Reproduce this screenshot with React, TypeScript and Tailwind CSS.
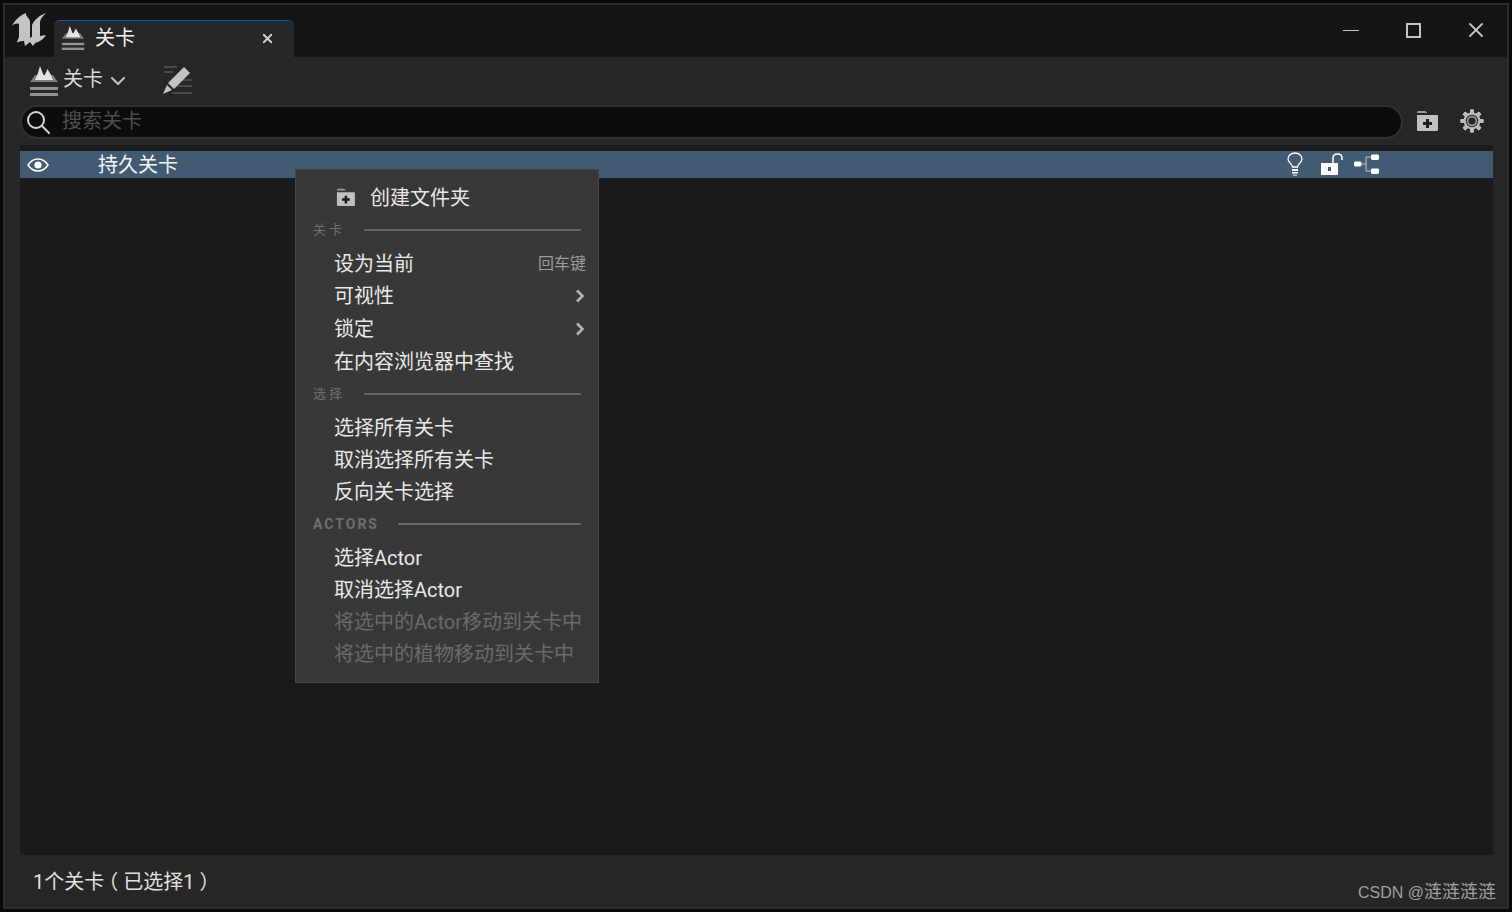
import { ChevronDown, X } from 'lucide-react';

const cn = "font-['Roboto','Noto_Sans_CJK_SC',sans-serif]";

// 关卡图标:山 + 横线
function LevelIcon({ className }: { className?: string }) {
  return (
    <svg viewBox="0 0 28 30" className={className}>
      <path d="M5 9 L0 16 L28 16 L23 9 Z" fill="#7c7c7c" />
      <path d="M5 14 L8 7 L10 0 L13 8 L14.5 9.5 L17.5 3 L21 9 L23 14 Z" fill="#e4e4e4" />
      <rect x="0" y="21" width="28" height="3" fill="#929292" />
      <rect x="0" y="27" width="28" height="3" fill="#929292" />
    </svg>
  );
}

function UnrealLogo() {
  return (
    <svg viewBox="0 0 36 36" className="h-9 w-9 text-[#c4c4c4]" fill="currentColor">
      <path d="M0 14 C2 9 8 3 14 1 C13 4 18 6 18 10 L18 26 L20 24.5 L20 13 C22 8 28 3 34 1 C31 4 28 7 28 11 L28 24 L34 23 C31 28 27 30 23 31 L21 34 L18 30 L13 34 L12 29 C9 29 5 30 5 31 C5 28 7 27 7 24 L7 13 C7 11 3 11 0 14 Z" />
    </svg>
  );
}

function NewFolderIcon({ className }: { className?: string }) {
  return (
    <svg viewBox="0 0 22 21" className={className}>
      <path d="M1 3 C1 1 2 1 3 1 L9 1 C10 1 11 2 11 3 Z" fill="#9a9a9a" />
      <path d="M1 5 L21 5 C21.6 5 22 5.4 22 6 L22 19.5 C22 20.3 21.5 21 21 21 L2 21 C1.4 21 1 20.5 1 20 Z" fill="#c0c0c0" />
      <path d="M10 9 L13 9 L13 12 L16 12 L16 15 L13 15 L13 18 L10 18 L10 15 L7 15 L7 12 L10 12 Z" fill="#1c1c1c" />
    </svg>
  );
}

function EditIcon() {
  return (
    <svg viewBox="0 0 30 30" className="h-[30px] w-[30px]" fill="none">
      <path d="M1 1 L14 1 M1 6 L10 6 M17 14 L29 14 M14 20 L29 20 M9 27 L29 27" stroke="#6e6e6e" strokeWidth="1.2" />
      <path d="M21 1 L27 7 L11 23 L5 17 Z" fill="#c4c4c4" />
      <path d="M4 19 L9 24 L0 28 Z" fill="#c4c4c4" />
    </svg>
  );
}

function SearchIcon() {
  return (
    <svg viewBox="0 0 24 24" className="h-6 w-6" fill="none" stroke="#d4d4d4" strokeWidth="2">
      <circle cx="10" cy="10" r="8" />
      <path d="M16 16 L23 23" strokeLinecap="round" />
    </svg>
  );
}

function GearIcon() {
  return (
    <svg viewBox="0 0 24 24" className="h-6 w-6">
      <g fill="#bcbcbc">
        {[0, 45, 90, 135, 180, 225, 270, 315].map((a) => (
          <rect key={a} x="10" y="0.5" width="4" height="23" rx="0.8" transform={`rotate(${a} 12 12)`} />
        ))}
      </g>
      <circle cx="12" cy="12" r="8.4" fill="#bcbcbc" />
      <circle cx="12" cy="12" r="6.2" fill="#262626" />
      <circle cx="12" cy="12" r="4.4" fill="none" stroke="#9a9a9a" strokeWidth="1.6" />
    </svg>
  );
}

function EyeIcon() {
  return (
    <svg viewBox="0 0 22 14" className="h-[14px] w-[22px]">
      <path d="M1 7 C4 2.5 7.5 1 11 1 C14.5 1 18 2.5 21 7 C18 11.5 14.5 13 11 13 C7.5 13 4 11.5 1 7 Z" fill="none" stroke="#ffffff" strokeWidth="1.5" />
      <circle cx="11" cy="7" r="3.6" fill="#ffffff" />
    </svg>
  );
}

function BulbIcon() {
  return (
    <svg viewBox="0 0 16 24" className="h-6 w-4" fill="none">
      <path d="M5.5 15 C5.5 12 1 10.5 1 7 C1 3.5 4 1 8 1 C12 1 15 3.5 15 7 C15 10.5 10.5 12 10.5 15 Z" stroke="#ffffff" strokeWidth="1.3" />
      <rect x="5" y="17" width="6" height="2" fill="#ffffff" />
      <rect x="5" y="20" width="6" height="1.5" fill="#ffffff" />
      <rect x="6" y="22.5" width="4" height="1.2" fill="#cfcfcf" />
    </svg>
  );
}

function UnlockIcon() {
  return (
    <svg viewBox="0 0 22 22" className="h-[22px] w-[22px]">
      <path d="M12 10 L12 5 C12 2.5 14 1 16.5 1 C19 1 21 2.5 21 5 L21 7" fill="none" stroke="#ffffff" strokeWidth="1.5" />
      <path d="M0 10 L17 10 L17 21 C17 21.6 16.6 22 16 22 L1 22 C0.4 22 0 21.6 0 21 Z" fill="#ffffff" />
      <rect x="7" y="14" width="3" height="4" fill="#435a73" />
    </svg>
  );
}

function HierarchyIcon() {
  return (
    <svg viewBox="0 0 25 20" className="h-5 w-[25px]">
      <path d="M7 10 L12 10 M12 3 L12 17 M12 3 L18 3 M12 17 L18 17" stroke="#b7c3d0" strokeWidth="1" fill="none" />
      <rect x="0" y="7.5" width="7.5" height="5" rx="1.4" fill="#ffffff" />
      <rect x="17" y="0.5" width="8" height="5.5" rx="1.4" fill="#ffffff" />
      <rect x="17" y="14.5" width="8" height="5.5" rx="1.4" fill="#ffffff" />
    </svg>
  );
}

function MenuItem({ label, right, arrow, disabled }: { label: string; right?: string; arrow?: boolean; disabled?: boolean }) {
  return (
    <div className={`flex h-8 items-center pl-[38px] pr-[13px] pt-[2px] text-[20px] ${disabled ? 'text-[#6a6a6a]' : 'text-[#e8e8e8]'}`}>
      <span className="flex-1 whitespace-nowrap">{label}</span>
      {right && <span className="-mr-px text-[16px] text-[#9a9a9a]">{right}</span>}
      {arrow && (
        <svg viewBox="0 0 10 14" className="h-[14px] w-[10px]" fill="none" stroke="#b4b4b4" strokeWidth="2.6">
          <path d="M2 1.5 L7.5 7 L2 12.5" />
        </svg>
      )}
    </div>
  );
}

function MenuHeading({ label, wide }: { label: string; wide?: boolean }) {
  return (
    <div className="flex h-[34px] items-center pl-[17px] pr-[17px]">
      <span className={`whitespace-nowrap text-[#6e6e6e] ${wide ? 'text-[14px] font-bold tracking-[2px]' : 'text-[13px] tracking-[3px]'}`}>{label}</span>
      <div className="ml-[19px] h-0.5 flex-1 bg-[#666666]" />
    </div>
  );
}

export default function App() {
  return (
    <div className={`${cn} h-[912px] w-[1512px] bg-[#0b0b0b] p-[3px]`}>
      <div className="relative flex h-[906px] flex-col border-2 border-[#2e2e2e] bg-[#262626]">
        {/* 标题栏 */}
        <div className="flex h-[52px] shrink-0 items-end bg-[#151515]">
          <div className="mb-[9px] ml-[7px] mr-[6px]"><UnrealLogo /></div>
          <div className="flex h-[37px] w-[240px] items-center rounded-t-md border-t border-t-[#0a5cb8] bg-[#262626] pb-[2px] pl-[7px] pr-[19px]">
            <LevelIcon className="h-[24px] w-[24px]" />
            <span className="ml-[10px] flex-1 text-[20px] leading-none text-[#f2f2f2]">关卡</span>
            <X size={15} strokeWidth={3} className="text-[#d0d0d0]" />
          </div>
          <div className="flex-1" />
          <div className="mb-[15px] flex items-center pr-[19px] text-[#c4c4c4]">
            <div className="h-px w-[16px] bg-[#c4c4c4]" />
            <div className="ml-[47px] h-[15px] w-[15px] border-2 border-[#c4c4c4]" />
            <X size={24} strokeWidth={1.8} className="ml-[43px]" />
          </div>
        </div>

        {/* 工具栏 */}
        <div className="flex h-[47px] shrink-0 items-center pl-[25px]">
          <LevelIcon className="h-[30px] w-[28px]" />
          <span className="mb-[3px] ml-[5px] text-[20px] text-[#d8d8d8]">关卡</span>
          <ChevronDown size={24} strokeWidth={2} className="ml-[3px] text-[#c4c4c4]" />
          <div className="ml-[33px]"><EditIcon /></div>
        </div>

        {/* 搜索栏 */}
        <div className="flex h-[36px] shrink-0 items-center pl-[15px] pr-[18px]">
          <div className="flex h-[34px] flex-1 items-center rounded-full border-2 border-[#303030] bg-[#0c0c0c] pl-[4px]">
            <SearchIcon />
            <span className="mb-[2px] ml-[12px] text-[20px] text-[#4e4e4e]">搜索关卡</span>
          </div>
          <div className="mb-[4px] ml-[13px] mr-[11px]"><NewFolderIcon className="h-[21px] w-[22px]" /></div>
          <div className="mb-[2px] ml-[11px] mr-[5px]"><GearIcon /></div>
        </div>

        {/* 列表 */}
        <div className="ml-[15px] mr-[14px] mt-[5px] flex min-h-0 flex-1 flex-col bg-[#1a1a1a] pt-[6px]">
          <div className="relative flex h-[27px] shrink-0 items-center bg-[#435a73] pl-[7px] text-[20px] text-[#f4f4f4]">
            <EyeIcon />
            <span className="ml-[49px]">持久关卡</span>
            <div className="absolute left-[1267px] top-[1px] flex items-center gap-[18px]">
              <BulbIcon />
              <UnlockIcon />
            </div>
            <div className="absolute left-[1334px] top-[3px]"><HierarchyIcon /></div>
          </div>
        </div>

        {/* 状态栏 */}
        <div className="flex h-[52px] shrink-0 items-center pl-[28px] pt-[2px] text-[20px] text-[#e0e0e0]">
          <span>1个关卡</span>
          <span className="ml-[4px] mr-[5px] [font-feature-settings:'halt']">（</span>
          <span>已选择1</span>
          <span className="ml-[5px] [font-feature-settings:'halt']">）</span>
        </div>

        {/* 右键菜单 */}
        <div className="absolute left-[290px] top-[164px] w-[304px] border border-[#464646] bg-[#383838] pt-[11px]">
          <div className="flex h-[32px] items-center pl-[40px] pt-[2px] text-[20px] text-[#e8e8e8]">
            <NewFolderIcon className="mb-[3px] h-[18px] w-[19px]" />
            <span className="ml-[15px]">创建文件夹</span>
          </div>
          <MenuHeading label="关卡" />
          <MenuItem label="设为当前" right="回车键" />
          <MenuItem label="可视性" arrow />
          <div className="h-[1px]" />
          <MenuItem label="锁定" arrow />
          <div className="h-[1px]" />
          <MenuItem label="在内容浏览器中查找" />
          <MenuHeading label="选择" />
          <MenuItem label="选择所有关卡" />
          <MenuItem label="取消选择所有关卡" />
          <MenuItem label="反向关卡选择" />
          <MenuHeading label="ACTORS" wide />
          <MenuItem label="选择Actor" />
          <MenuItem label="取消选择Actor" />
          <MenuItem label="将选中的Actor移动到关卡中" disabled />
          <MenuItem label="将选中的植物移动到关卡中" disabled />
          <div className="h-[13px]" />
        </div>

        {/* 水印 */}
        <div className="absolute bottom-[1px] right-[11px] font-['Liberation_Sans','Noto_Sans_CJK_SC',sans-serif] text-[16px] text-[#a0a0a0]">
          CSDN @<span className="text-[18px]">涟涟涟涟</span>
        </div>
      </div>
    </div>
  );
}
